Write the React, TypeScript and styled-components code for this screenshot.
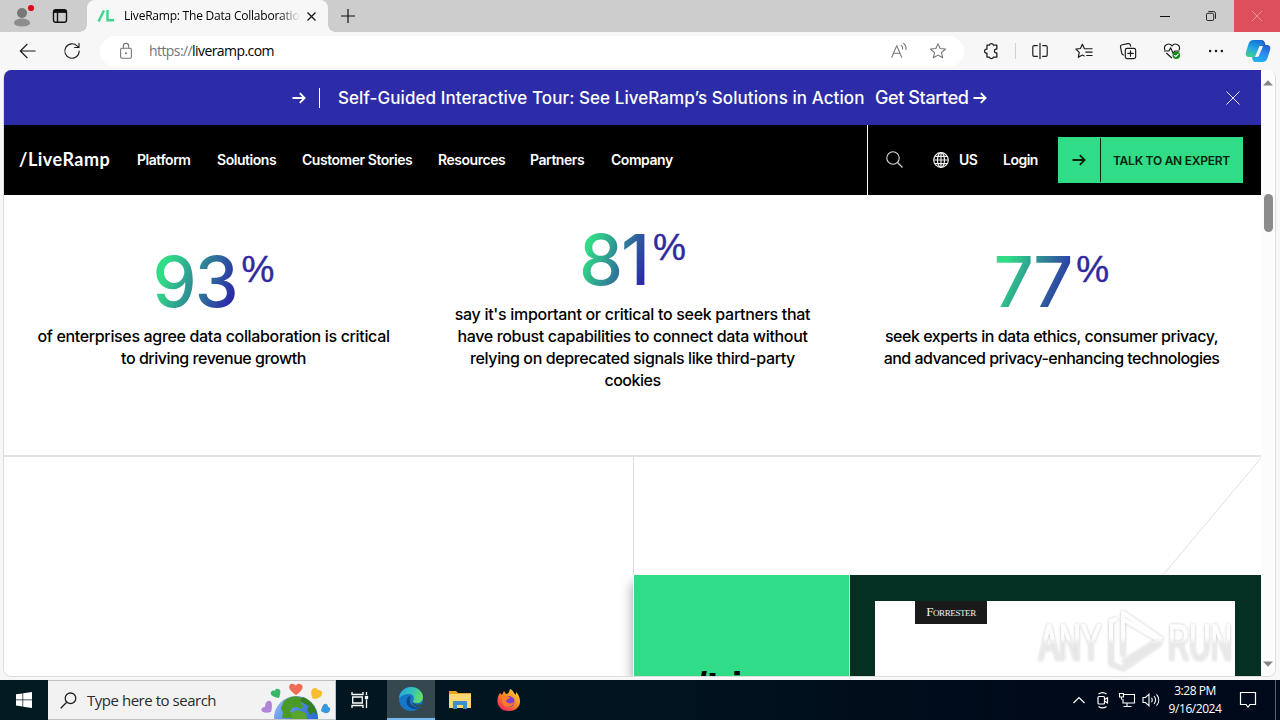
import React from 'react';
import styled, { createGlobalStyle } from 'styled-components';

const GlobalStyle = createGlobalStyle`
  * {
    box-sizing: border-box;
  }

  body {
    margin: 0;
    overflow: hidden;
    font-family: Inter, 'Liberation Sans', sans-serif;
  }

  svg {
    display: block;
    flex-shrink: 0;
  }
`;

const Desktop = styled.div`
  width: 1280px;
  height: 720px;
  display: flex;
  flex-direction: column;
  overflow: hidden;
  background: #f7f7f7;
`;

/* ---------- browser chrome ---------- */

const TitleBar = styled.div`
  height: 32px;
  display: flex;
  background: #cdcdcd;
`;

const ProfileArea = styled.div`
  width: 87px;
  display: flex;
  align-items: center;
  gap: 15px;
  padding-left: 9px;
`;

const BrowserTab = styled.div`
  position: relative;
  width: 241px;
  display: flex;
  align-items: center;
  padding: 0 9px 0 10px;
  background: #f7f7f7;
  border-radius: 8px 8px 0 0;

  /* flared corners where the tab meets the toolbar */
  &::before,
  &::after {
    content: '';
    position: absolute;
    bottom: 0;
    width: 7px;
    height: 7px;
  }

  &::before {
    left: -7px;
    background: radial-gradient(circle at 0 0, transparent 6.5px, #f7f7f7 7px);
  }

  &::after {
    right: -7px;
    background: radial-gradient(circle at 100% 0, transparent 6.5px, #f7f7f7 7px);
  }
`;

const TabTitle = styled.div`
  width: 177px;
  margin-left: 9px;
  overflow: hidden;
  white-space: nowrap;
  font: 12px/16px 'Open Sans', sans-serif;
  letter-spacing: -0.22px;
  color: #000;
  mask-image: linear-gradient(90deg, #000 155px, transparent 176px);
`;

const TabClose = styled.div`
  margin-left: 6px;
`;

const NewTab = styled.div`
  flex: 1;
  display: flex;
  align-items: center;
  padding-left: 13px;
`;

const WindowButton = styled.div<{ $close?: boolean }>`
  width: 46px;
  display: flex;
  align-items: center;
  justify-content: center;
  background: ${props => (props.$close ? '#de4f5c' : 'transparent')};
`;

const Toolbar = styled.div`
  height: 38px;
  display: flex;
  align-items: center;
  padding: 0 9px 0 19px;
  background: #f7f7f7;
`;

const NavButtons = styled.div`
  display: flex;
  gap: 26px;
  width: 81px;
`;

const AddressBar = styled.div`
  width: 864px;
  height: 31px;
  display: flex;
  align-items: center;
  padding: 0 17px;
  border-radius: 16px;
  background: #fff;
`;

const Url = styled.div`
  flex: 1;
  margin-left: 14px;
  font: 14px/20px 'Open Sans', sans-serif;
  letter-spacing: -0.58px;
  color: #000;

  span {
    color: #757575;
  }
`;

const AddressActions = styled.div`
  display: flex;
  gap: 21px;
`;

const ToolbarActions = styled.div`
  flex: 1;
  display: flex;
  align-items: center;
  gap: 26px;
  padding-left: 18px;
`;

const Divider = styled.div`
  width: 1px;
  height: 16px;
  margin: 0 -11px;
  background: #d2d2d2;
`;

const Copilot = styled.div`
  margin-left: -6px;
`;

/* ---------- page ---------- */

const Viewport = styled.div`
  width: 1273px;
  height: 607px;
  margin-left: 3px;
  display: flex;
  overflow: hidden;
  border: 1px solid #dcdcdc;
  border-top: 0;
  border-radius: 8px;
  background: #fff;
`;

const Page = styled.div`
  width: 1257px;
  display: flex;
  flex-direction: column;
`;

const ScrollTrack = styled.div`
  flex: 1;
  display: flex;
  flex-direction: column;
  align-items: center;
  padding: 10px 0 9px;
  background: #fcfcfc;
`;

const ScrollThumb = styled.div`
  width: 9px;
  height: 38px;
  margin: 108px 0 auto;
  border-radius: 5px;
  background: #8b8b8b;
`;

const Banner = styled.div`
  height: 55px;
  display: flex;
  align-items: center;
  padding: 0 21px 0 288px;
  background: #2d2ca8;
  color: #fff;
`;

const BannerRule = styled.div`
  width: 1px;
  height: 20px;
  margin-left: 13px;
  background: #fff;
`;

const BannerText = styled.div`
  width: 537px;
  margin-left: 18px;
  white-space: nowrap;
  font-size: 17px;
  font-weight: 500;
  letter-spacing: 0.07px;
`;

const BannerLink = styled.div`
  flex: 1;
  display: flex;
  align-items: center;
  gap: 4px;
  white-space: nowrap;
  font-size: 18px;
  font-weight: 500;
  letter-spacing: -0.4px;
`;

const Header = styled.div`
  height: 70px;
  display: flex;
  align-items: center;
  background: #000;
  color: #fff;
`;

const Brand = styled.div`
  width: 118px;
  margin-left: 15px;
  padding-bottom: 2px;
  font: 700 18px/24px Lato, sans-serif;
  letter-spacing: 0.5px;
`;

const Menu = styled.div`
  flex: 1;
  display: flex;
  padding-bottom: 2px;
`;

const MenuItem = styled.div<{ $width: number }>`
  width: ${props => props.$width}px;
  white-space: nowrap;
  font-size: 14px;
  font-weight: 600;
  letter-spacing: -0.46px;
`;

const HeaderTools = styled.div`
  width: 394px;
  height: 70px;
  display: flex;
  align-items: center;
  padding-left: 18px;
  border-left: 1px solid #fff;
`;

const Region = styled.div`
  width: 70px;
  display: flex;
  align-items: center;
  gap: 10px;
  margin-left: 29px;
`;

const ToolLabel = styled.div`
  padding-bottom: 1px;
  white-space: nowrap;
  font-size: 14px;
  font-weight: 600;
  letter-spacing: -0.5px;
`;

const Login = styled(ToolLabel)`
  width: 55px;
`;

const CtaButton = styled.div`
  width: 185px;
  height: 46px;
  display: flex;
  align-items: center;
  background: #31dc86;
  color: #06210f;
`;

const CtaArrow = styled.div`
  width: 43px;
  height: 44px;
  display: flex;
  align-items: center;
  justify-content: center;
  border-right: 1px solid #06210f;
`;

const CtaText = styled.div`
  flex: 1;
  padding-left: 12px;
  white-space: nowrap;
  font-size: 12px;
  font-weight: 600;
  letter-spacing: -0.25px;
`;

const Stats = styled.div`
  height: 262px;
  display: grid;
  grid-template-columns: repeat(3, 1fr);
  align-items: center;
  padding-bottom: 34px;
  border-bottom: 2px solid #e2e2e2;
`;

const Stat = styled.div`
  display: flex;
  flex-direction: column;
  align-items: center;
`;

const Figure = styled.div`
  height: 78px;
  display: flex;
  align-items: flex-start;
  gap: 5px;
`;

const Digits = styled.div`
  font-size: 70px;
  font-weight: 500;
  line-height: 69px;
  letter-spacing: -2px;
  background: linear-gradient(110deg, #31dc86 18%, #2d2ca8 88%);
  background-clip: text;
  color: transparent;
`;

const Percent = styled.div`
  font: 37px/46px 'Liberation Sans', sans-serif;
  -webkit-text-stroke: 0.4px #312a9e;
  color: #312a9e;
`;

const StatLine = styled.div<{ $spacing: number }>`
  line-height: 22px;
  white-space: nowrap;
  font-size: 16px;
  font-weight: 500;
  letter-spacing: ${props => props.$spacing}px;
  color: #000;
`;

const Split = styled.div`
  flex: 1;
  display: flex;
  min-height: 0;
`;

const EmptyHalf = styled.div`
  width: 629px;
`;

const ReportHalf = styled.div`
  width: 628px;
  display: flex;
  flex-direction: column;
`;

const Accent = styled.div`
  height: 118px;
  border-left: 1px solid #dedede;
  display: flex;
  justify-content: flex-end;
`;

const CardShadow = styled.div`
  flex: 1;
  display: flex;
  min-height: 0;
  box-shadow: 0 8px 12px rgba(0, 0, 0, 0.4);
  clip-path: inset(0 0 0 -14px);
`;

const ReportCard = styled.div`
  flex: 1;
  display: flex;
  margin-left: 1px;
  overflow: hidden;
`;

const CardBrand = styled.div`
  width: 216px;
  padding: 89px 0 0 62px;
  border-right: 1px solid #b9efd2;
  background: #31dc86;
  color: #000;
  font: 700 40px/46px 'Liberation Sans', sans-serif;
`;

const Cover = styled.div`
  flex: 1;
  padding: 26px 26px 0 25px;
  background: #033023;
`;

const CoverSheet = styled.div`
  height: 76px;
  padding-left: 40px;
  background: #fff;
`;

const Publisher = styled.div`
  width: 72px;
  height: 23px;
  background: #1a1a1a;
  color: #f2f2f2;
  text-align: center;
  font: 13px/22px 'Liberation Serif', serif;
  font-variant: small-caps;
  letter-spacing: -0.4px;
`;

const Watermark = styled.div`
  position: absolute;
  left: 1030px;
  top: 602px;
`;

/* ---------- taskbar ---------- */

const Taskbar = styled.div`
  height: 40px;
  margin-top: 3px;
  display: flex;
  background: linear-gradient(90deg, #021a22 0%, #01141f 50%, #000a1a 80%);
  color: #fff;
`;

const TaskButton = styled.div<{ $active?: boolean }>`
  width: 48px;
  display: flex;
  align-items: center;
  justify-content: center;
  background: ${props => (props.$active ? '#35484f' : 'transparent')};
  border-bottom: ${props => (props.$active ? '2px solid #76b9ed' : '0')};
  margin-right: 1px;
`;

const SearchBox = styled.div`
  width: 288px;
  margin-right: 0;
  margin-left: -1px;
  display: flex;
  align-items: center;
  padding-left: 12px;
  border: 1px solid #bfc3c5;
  border-left: 0;
  background: #f2f2f2;

  & + ${TaskButton} {
    margin-right: 3px;
  }
`;

const SearchHint = styled.div`
  width: 174px;
  margin-left: 10px;
  white-space: nowrap;
  font: 15px/20px 'Open Sans', sans-serif;
  letter-spacing: -0.47px;
  color: #2b2b2b;
`;

const Tray = styled.div`
  margin-left: auto;
  display: flex;
  align-items: center;
`;

const TrayIcons = styled.div`
  display: flex;
  align-items: center;
  gap: 6px;

  svg:first-child {
    margin-right: 2px;
  }
`;

const Clock = styled.div`
  width: 70px;
  text-align: center;
  white-space: nowrap;
  font: 12px/18px 'Open Sans', sans-serif;
  letter-spacing: -0.45px;
`;

const Notifications = styled.div`
  width: 35px;
  height: 40px;
  display: flex;
  align-items: center;
  justify-content: center;
  margin-right: 10px;
`;

const ShowDesktop = styled.div`
  width: 5px;
  height: 40px;
  border-left: 1px solid #5a626c;
`;

interface IconProps {
  size?: number;
  color?: string;
  width?: number;
  children: React.ReactNode;
}

// Line icon on a 20x20 grid
const LineIcon: React.FC<IconProps> = ({ size = 20, color = '#1b1b1b', width = 1.2, children }) => (
  <svg
    width={size}
    height={size}
    viewBox="0 0 20 20"
    fill="none"
    stroke={color}
    strokeWidth={width}
    strokeLinecap="round"
    strokeLinejoin="round"
  >
    {children}
  </svg>
);

const ArrowRight: React.FC<{ color?: string }> = ({ color = '#fff' }) => (
  <svg width="14" height="12" viewBox="0 0 14 12" fill="none" stroke={color} strokeWidth="1.8">
    <path d="M0.5 6H12.5M7.8 1.2 12.6 6 7.8 10.8" />
  </svg>
);

const menu = [
  { label: 'Platform', width: 80 },
  { label: 'Solutions', width: 85 },
  { label: 'Customer Stories', width: 136 },
  { label: 'Resources', width: 92 },
  { label: 'Partners', width: 81 },
  { label: 'Company', width: 70 },
];

const stats = [
  {
    value: '93',
    lines: [
      { text: 'of enterprises agree data collaboration is critical', spacing: -0.34 },
      { text: 'to driving revenue growth', spacing: -0.46 },
    ],
  },
  {
    value: '81',
    lines: [
      { text: "say it's important or critical to seek partners that", spacing: -0.3 },
      { text: 'have robust capabilities to connect data without', spacing: -0.34 },
      { text: 'relying on deprecated signals like third-party', spacing: -0.4 },
      { text: 'cookies', spacing: -0.5 },
    ],
  },
  {
    value: '77',
    lines: [
      { text: 'seek experts in data ethics, consumer privacy,', spacing: -0.48 },
      { text: 'and advanced privacy-enhancing technologies', spacing: -0.54 },
    ],
  },
];

const BrowserChrome: React.FC = () => (
  <>
    <TitleBar>
      <ProfileArea>
        <svg width="28" height="28" viewBox="0 0 28 28">
          <circle cx="13" cy="11" r="5" fill="#777" />
          <path d="M5 21c0-6 16-6 16 0 0 4.500-16 4.500-16 0z" fill="#8d8d8d" />
          <circle cx="22" cy="6" r="3.1" fill="#d90d15" />
        </svg>
        <svg width="16" height="16" viewBox="0 0 16 16" fill="none" stroke="#111" strokeWidth="1.4">
          <rect x="1.5" y="1.7" width="13" height="12.5" rx="2.2" />
          <path d="M2 3.4h12" strokeWidth="3" />
          <path d="M5.5 4v10" />
        </svg>
      </ProfileArea>
      <BrowserTab>
        <svg width="18" height="12" viewBox="0 0 18 12" fill="none" stroke="#3ed68c" strokeWidth="2.4">
          <path d="M1.5 11.5 7 .5M10.5 0v10.3H17" />
        </svg>
        <TabTitle>LiveRamp: The Data Collaboration</TabTitle>
        <TabClose>
          <svg width="9" height="9" viewBox="0 0 9 9" stroke="#111" strokeWidth="1.2">
            <path d="M.5.5l8 8M8.5.5l-8 8" />
          </svg>
        </TabClose>
      </BrowserTab>
      <NewTab>
        <svg width="14" height="14" viewBox="0 0 14 14" stroke="#111" strokeWidth="1.2">
          <path d="M7 0v14M0 7h14" />
        </svg>
      </NewTab>
      <WindowButton>
        <svg width="10" height="10" viewBox="0 0 10 10" stroke="#111">
          <path d="M0 5.5h10" />
        </svg>
      </WindowButton>
      <WindowButton>
        <svg width="10" height="10" viewBox="0 0 11 11" fill="none" stroke="#111">
          <rect x=".5" y="2.5" width="8" height="8" rx="1.5" />
          <path d="M2.5.5H8A2.5 2.5 0 0 1 10.5 3v5.5" />
        </svg>
      </WindowButton>
      <WindowButton $close>
        <svg width="10" height="10" viewBox="0 0 10 10" stroke="#f08d90">
          <path d="M0 0l10 10M10 0L0 10" />
        </svg>
      </WindowButton>
    </TitleBar>
    <Toolbar>
      <NavButtons>
        <LineIcon size={18}>
          <path d="M18 10H2M9 2.5 1.5 10 9 17.5" />
        </LineIcon>
        <LineIcon size={18}>
          <path d="M18 10a8 8 0 1 1-2.3-5.6L17.5 6M17.8 1.5V6.2H13" />
        </LineIcon>
      </NavButtons>
      <AddressBar>
        <LineIcon size={18} color="#757575">
          <rect x="4" y="7" width="12" height="11" rx="1.5" />
          <path d="M7 7V4.5a3 3 0 0 1 6 0V7" />
          <circle cx="10" cy="12.5" r=".6" fill="#757575" />
        </LineIcon>
        <Url>
          <span>https://</span>liveramp.com
        </Url>
        <AddressActions>
          <LineIcon size={18} color="#757575">
            <path d="M2 17 7.5 4 13 17M4 12.5h7M12.5 3.8c1.2 1 1.8 2.4 1.5 4M15 1.5c2.2 1.6 3.2 4.2 2.7 7" />
          </LineIcon>
          <LineIcon size={18} color="#757575">
            <path d="M10 1.8l2.4 5.4 5.900.6-4.400 4 1.300 5.800L10 14.600l-5.200 3 1.300-5.800-4.400-4 5.900-.6z" />
          </LineIcon>
        </AddressActions>
      </AddressBar>
      <ToolbarActions>
        <LineIcon size={18} width={1.4}>
          <path d="M5.5 3.5h2.700a2.300 2.300 0 0 1 4.500 0h3.800v4.300h-1a2.200 2.200 0 0 0 0 4.300h1v4.600h-3.800a2.300 2.300 0 0 1-4.500 0H5.500v-4.400a2.200 2.200 0 1 1 0-4.300z" />
        </LineIcon>
        <Divider />
        <LineIcon size={18} width={1.3}>
          <path d="M10 1.5v17M7 4H3.5A1.5 1.5 0 0 0 2 5.5v9A1.5 1.5 0 0 0 3.5 16H7M13 4h3.5A1.5 1.5 0 0 1 18 5.5v9a1.5 1.5 0 0 1-1.5 1.5H13" />
        </LineIcon>
        <LineIcon size={18} width={1.3}>
          <path d="M10.5 7.5 8.2 2.5 6 7.2l-5 .7 3.7 3.6-1 5.5 4.5-2.5 2 1M10.5 7.5H19M12 11.3h7M13 15h6" />
        </LineIcon>
        <LineIcon size={18} width={1.3}>
          <rect x="7" y="7" width="11.5" height="11.5" rx="2" />
          <path d="M12.8 9.7v6M9.8 12.7h6M5 14.5a3 3 0 0 1-2-2.2L1.7 5.8a2.3 2.3 0 0 1 1.8-2.7L10 1.8A2.3 2.3 0 0 1 12.7 3.6l.2.9" />
        </LineIcon>
        <LineIcon size={18} width={1.3}>
          <path d="M2 8.5C0 3 7 0 10 4.5 13 0 20 3 18 8.5M1.5 10h5l2-3.5 3 6.5 1.5-3H18M4 12.5 9.5 17.5" />
          <circle cx="14.8" cy="14.8" r="4.2" fill="#128a17" stroke="none" />
          <path d="M12.8 15l1.4 1.3 2.6-2.8" stroke="#fff" />
        </LineIcon>
        <LineIcon size={18}>
          <g fill="#1b1b1b" stroke="none">
            <circle cx="3.5" cy="10" r="1.4" />
            <circle cx="10" cy="10" r="1.4" />
            <circle cx="16.5" cy="10" r="1.4" />
          </g>
        </LineIcon>
        <Copilot>
          <svg width="26" height="24" viewBox="0 0 26 24">
            <defs>
              <linearGradient id="copilotA" x1="0.5" y1="0" x2="0.2" y2="1">
                <stop offset="0" stopColor="#1673d8" />
                <stop offset="0.5" stopColor="#25a9e2" />
                <stop offset="1" stopColor="#45cf85" />
              </linearGradient>
              <linearGradient id="copilotB" x1="0.7" y1="0" x2="0.4" y2="1">
                <stop offset="0" stopColor="#1748b5" />
                <stop offset="0.5" stopColor="#2d83ee" />
                <stop offset="1" stopColor="#21b2f0" />
              </linearGradient>
            </defs>
            <path d="M13 1h3c3 0 4 2 4.5 5H22c3 0 3.8 2.5 3 5l-2.5 8c-.9 2.8-2.5 4-5 4H11c-3 0-3.5-2-4-5h3z" fill="url(#copilotB)" />
            <path d="M7 18H4c-3 0-3.8-2.5-3-5l2.5-8C4.4 2.2 6 1 8.5 1H15c2.5 0 3.3 2 4 5h-2.5c-1.6 0-2.2.8-2.7 2.3L11 16.5C10.5 18 10 18 8.5 18z" fill="url(#copilotA)" />
            <path d="M14.5 7h3.5L14 16.500c-.6 1.200-1 1.500-2 1.500h-2z" fill="#f4fbff" />
          </svg>
        </Copilot>
      </ToolbarActions>
    </Toolbar>
  </>
);

const SiteHeader: React.FC = () => (
  <>
    <Banner>
      <ArrowRight />
      <BannerRule />
      <BannerText>Self-Guided Interactive Tour: See LiveRamp’s Solutions in Action</BannerText>
      <BannerLink>
        Get Started
        <ArrowRight />
      </BannerLink>
      <svg width="14" height="14" viewBox="0 0 14 14" stroke="#e4e4ff">
        <path d="M.5.5l13 13M13.5.5l-13 13" />
      </svg>
    </Banner>
    <Header>
      <Brand>/LiveRamp</Brand>
      <Menu>
        {menu.map(item => (
          <MenuItem key={item.label} $width={item.width}>
            {item.label}
          </MenuItem>
        ))}
      </Menu>
      <HeaderTools>
        <svg width="18" height="18" viewBox="0 0 18 18" fill="none" stroke="#ddd" strokeWidth="1.1">
          <circle cx="7" cy="7" r="6.2" />
          <path d="M11.5 11.5l5 5" />
        </svg>
        <Region>
          <svg width="16" height="16" viewBox="0 0 16 16" fill="none" stroke="#eee" strokeWidth="1.2">
            <circle cx="8" cy="8" r="7.3" />
            <ellipse cx="8" cy="8" rx="3.5" ry="7.3" />
            <path d="M8 .7v14.6M.7 8h14.6M1.8 4.3h12.4M1.8 11.7h12.4" />
          </svg>
          <ToolLabel>US</ToolLabel>
        </Region>
        <Login>Login</Login>
        <CtaButton>
          <CtaArrow>
            <ArrowRight color="#06210f" />
          </CtaArrow>
          <CtaText>TALK TO AN EXPERT</CtaText>
        </CtaButton>
      </HeaderTools>
    </Header>
  </>
);

const AnyRunMark: React.FC = () => (
  <Watermark>
    <svg width="212" height="74" viewBox="0 0 212 74">
      <defs>
        <linearGradient id="markFade" gradientUnits="userSpaceOnUse" x1="0" y1="8" x2="0" y2="70">
          <stop offset="0.45" stopColor="#fff" stopOpacity="0.95" />
          <stop offset="0.55" stopColor="#e8e8e8" stopOpacity="0.75" />
        </linearGradient>
        <filter id="markGlow" x="-10%" y="-20%" width="120%" height="140%">
          <feDropShadow dx="0" dy="0" stdDeviation="1.8" floodColor="#000" floodOpacity="0.28" />
        </filter>
      </defs>
      <g
        filter="url(#markGlow)"
        fill="url(#markFade)"
        stroke="url(#markFade)"
        strokeWidth="1"
        fontFamily="'Liberation Sans', sans-serif"
        fontSize="50"
      >
        <text x="9" y="58" textLength="62" lengthAdjust="spacingAndGlyphs">
          ANY
        </text>
        <text x="138" y="58" textLength="64" lengthAdjust="spacingAndGlyphs">
          RUN
        </text>
        <g fill="none" strokeWidth="4" strokeLinejoin="round">
          <path d="M93 54V11l38 26-38 23" />
          <path d="M93 17l34 20" />
          <path d="M87 17l-6 2v43l12 5 38-26" />
        </g>
      </g>
    </svg>
  </Watermark>
);

const WindowsTaskbar: React.FC = () => (
  <Taskbar>
    <TaskButton>
      <svg width="16" height="16" viewBox="0 0 16 16" fill="#fff">
        <path d="M0 2.3 6.5 1.4v6.2H0zM7.2 1.3 16 0v7.6H7.2zM0 8.3h6.5v6.2L0 13.6zM7.2 8.3H16V16l-8.8-1.3z" />
      </svg>
    </TaskButton>
    <SearchBox>
      <svg width="17" height="17" viewBox="0 0 17 17" fill="none" stroke="#222" strokeWidth="1.3">
        <circle cx="10.5" cy="6.3" r="5.3" />
        <path d="M6.7 10.2.7 16.3" />
      </svg>
      <SearchHint>Type here to search</SearchHint>
      <svg width="72" height="38" viewBox="0 0 72 38">
        <defs>
          <linearGradient id="sea" x1="0" y1="0" x2="1" y2="0.7">
            <stop offset="0" stopColor="#9cc4fa" />
            <stop offset="0.5" stopColor="#4b86e6" />
            <stop offset="1" stopColor="#1f66c2" />
          </linearGradient>
        </defs>
        <circle cx="35" cy="37" r="22" fill="url(#sea)" />
        <path d="M23 20c7-6 14-5 18-3l2 3-3 2 3 4-4 2-3-2-5 1-2 4 4 2v4H21l1-5-2-5z" fill="#4a9a28" />
        <path d="M42 16c8 3 13 10 14 18l-4-3-2 3-4-5 2-4-6-3-3-3z" fill="#35801f" />
        <path d="M31 31l6-2 8 3 1 6H30z" fill="#5aa52e" />
        <path d="M35 14c-11-7-6-12-3-11 2 0 3 2 3 2s1-3 4-2c4 1 4 6-4 11z" fill="#ee6c55" />
        <path d="M18 17c-8-1-10-5-7-7 2-1 3 0 3 0s0-3 3-2c3 0 3 4 1 9z" fill="#38b768" />
        <path d="M52 18c-3-6-2-11 2-11 2 0 3 2 3 2s3 0 4 2c1 4-3 7-9 7z" fill="#f8bd31" />
        <path d="M10 31c-8 2-11-1-9-4 1-1 3-1 3-1s0-5 3-6c4-1 5 4 3 11z" fill="#b284d7" />
        <path d="M60 30c1-5 3-8 5-7 2 0 2 3 2 3s3 0 2 3c-1 4-5 4-9 1z" fill="#3699df" />
      </svg>
    </SearchBox>
    <TaskButton>
      <svg width="18" height="18" viewBox="0 0 18 18" fill="none" stroke="#fff" strokeWidth="1.3">
        <path d="M1 1v2.500h11V1M1 17v-2.500h11V17M1.700 6h9.600v6H1.700zM15.500 1v3M15.500 8.500V17" />
        <rect x="14.5" y="5.5" width="2" height="2" fill="#fff" />
      </svg>
    </TaskButton>
    <TaskButton $active>
      <svg width="26" height="26" viewBox="0 0 26 26">
        <defs>
          <linearGradient id="edgeTop" x1="0" y1="0" x2="1" y2="0.3">
            <stop offset="0" stopColor="#24a2e0" />
            <stop offset="0.6" stopColor="#35c4b8" />
            <stop offset="1" stopColor="#62dc68" />
          </linearGradient>
        </defs>
        <circle cx="13" cy="13" r="12" fill="#1677c9" />
        <path d="M1 12C2 5 7 1 13 1c7 0 12 5 12 10 0 4-3 6-6 6-3 0-5-1-4-2 2-2 1-7-4-7-4 0-8 2-10 4z" fill="url(#edgeTop)" />
        <path d="M10 11c-4 5 0 12 7 12 2 0 4-1 5-2-4 1-9-1-10-5-.5-2 0-4 1-5-1-1-2-1-3 0z" fill="#0c4a8e" />
        <path d="M14 15c1 3 6 5 10 2.5l-1.500 3c-4 1-8.500-1-8.500-5.500z" fill="#35484f" />
      </svg>
    </TaskButton>
    <TaskButton>
      <svg width="22" height="20" viewBox="0 0 22 20">
        <path d="M0 1h7l2 2h13v6H0z" fill="#e9a32c" />
        <rect y="4" width="22" height="14" fill="#fbd874" />
        <path d="M4 19v-8h14v8h-4v-4H8v4z" fill="#3b8fd0" />
      </svg>
    </TaskButton>
    <TaskButton>
      <svg width="24" height="24" viewBox="0 0 24 24">
        <defs>
          <linearGradient id="fox" x1="1" y1="0" x2="0.2" y2="1">
            <stop offset="0" stopColor="#ffe43d" />
            <stop offset="0.5" stopColor="#ff8a20" />
            <stop offset="1" stopColor="#f0245f" />
          </linearGradient>
        </defs>
        <path d="M3 5l2 2 2-4 2 3c2 0 3-1 4-5 3 1 4 4 4 4l2 2V4c7 7 5 19-7 19C0 23-2 12 3 5z" fill="url(#fox)" />
        <circle cx="12" cy="13.5" r="5.5" fill="#7a3fd0" />
        <path d="M5 9c4-2 5 0 8 0-1 3-4 2-4 4 1 3 6 3 8 1-1 6-11 7-12-1z" fill="#ff7d22" />
      </svg>
    </TaskButton>
    <Tray>
      <TrayIcons>
        <svg width="14" height="8" viewBox="0 0 14 8" fill="none" stroke="#fff" strokeWidth="1.2">
          <path d="M1.5 7 7 1.5 12.5 7" />
        </svg>
        <svg width="18" height="18" viewBox="0 0 18 18" fill="none" stroke="#fff" strokeWidth="1.2">
          <rect x="4" y="5.5" width="6.5" height="7.5" rx="1" />
          <path d="M10.500 8.500l3-1.800v5.200l-3-1.800M4.500 3c2.500-1.800 5.500-1.800 8 0M4.500 15.500c2.500 1.800 5.500 1.800 8 0" />
        </svg>
        <svg width="18" height="16" viewBox="0 0 18 16" fill="none" stroke="#fff" strokeWidth="1.1">
          <path d="M6 2.500h10.500v8.500H5V7M9 11v3.500M5.500 14.500h8M1.500 1.500h4V5h-4zM3.500 5v2.500" />
        </svg>
        <svg width="18" height="16" viewBox="0 0 18 16" fill="none" stroke="#fff" strokeWidth="1.1">
          <path d="M1 5.500h2.500L7 2.200v11.600L3.500 10.500H1zM9.500 5.700c1 1.500 1 3 0 4.600M12 4c2 2.500 2 5.500 0 8M14.500 2.300c3 3.500 3 8 0 11.400" />
        </svg>
      </TrayIcons>
      <Clock>
        3:28 PM
        <br />
        9/16/2024
      </Clock>
      <Notifications>
        <svg width="18" height="18" viewBox="0 0 18 18" fill="none" stroke="#fff" strokeWidth="1.2">
          <path d="M1.5 1.5h15v12H11l-2 2.5-2-2.5H1.5z" />
        </svg>
      </Notifications>
      <ShowDesktop />
    </Tray>
  </Taskbar>
);

const App: React.FC = () => (
  <Desktop>
    <GlobalStyle />
    <BrowserChrome />
    <Viewport>
      <Page>
        <SiteHeader />
        <Stats>
          {stats.map(stat => (
            <Stat key={stat.value}>
              <Figure>
                <Digits>{stat.value}</Digits>
                <Percent>%</Percent>
              </Figure>
              {stat.lines.map(line => (
                <StatLine key={line.text} $spacing={line.spacing}>
                  {line.text}
                </StatLine>
              ))}
            </Stat>
          ))}
        </Stats>
        <Split>
          <EmptyHalf />
          <ReportHalf>
            <Accent>
              <svg width="98" height="118" viewBox="0 0 98 118" stroke="#e0e0e0">
                <path d="M98 1 0 118" />
              </svg>
            </Accent>
            <CardShadow>
              <ReportCard>
                <CardBrand>/Li</CardBrand>
                <Cover>
                  <CoverSheet>
                    <Publisher>Forrester</Publisher>
                  </CoverSheet>
                </Cover>
              </ReportCard>
            </CardShadow>
          </ReportHalf>
        </Split>
      </Page>
      <ScrollTrack>
        <svg width="10" height="6" viewBox="0 0 10 6" fill="#858585">
          <path d="M0 5.5 5 .3l5 5.2z" />
        </svg>
        <ScrollThumb />
        <svg width="10" height="6" viewBox="0 0 10 6" fill="#858585">
          <path d="M0 .5h10L5 5.7z" />
        </svg>
      </ScrollTrack>
    </Viewport>
    <WindowsTaskbar />
    <AnyRunMark />
  </Desktop>
);

export default App;
